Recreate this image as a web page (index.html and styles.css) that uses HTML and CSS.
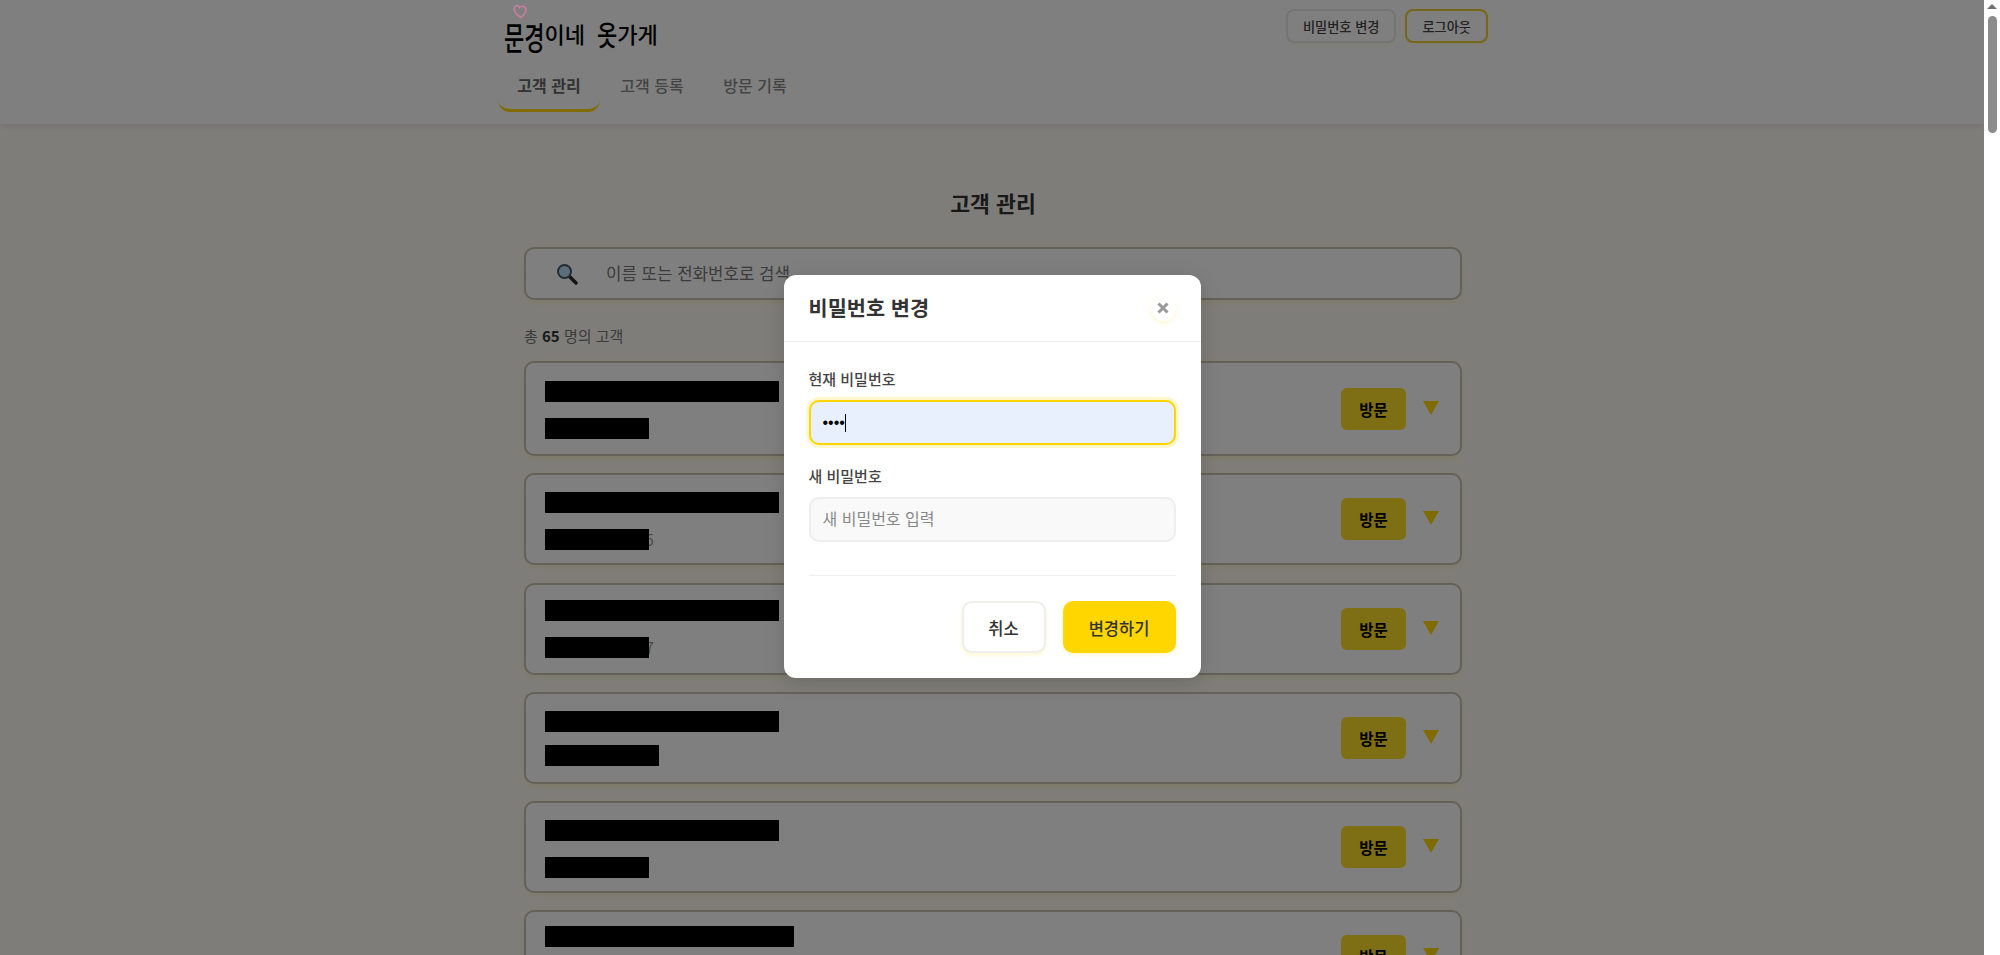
FILE: index.html
```html
<!DOCTYPE html>
<html lang="ko">
<head>
  <meta charset="UTF-8">
  <meta name="viewport" content="width=device-width, initial-scale=1.0">
  <title>문경이네 옷가게</title>
  <link rel="stylesheet" href="styles.css">
</head>
<body>
  <div class="page">
    <header class="site-header">
      <div class="header-inner">
        <div class="header-top">
          <div class="logo">
            <svg class="logo-heart" width="15" height="15" viewBox="0 0 15 15"><path d="M8 13.500C4 11 1 8 1.200 4.500 1.500 1.500 5 0.500 6.500 3.500 8 1.500 12 2 13 5 13.500 8 11 11 8 13.500Z" fill="none" stroke="#c97fa0" stroke-width="1.600"/></svg>
            <span class="logo-big">문경</span><span>이네</span><span class="logo-gap logo-mid">옷</span><span>가게</span>
          </div>
          <div class="header-actions">
            <button class="small-btn">비밀번호 변경</button>
            <button class="small-btn logout">로그아웃</button>
          </div>
        </div>
        <nav class="tabs">
          <a class="tab active">고객 관리</a>
          <a class="tab">고객 등록</a>
          <a class="tab">방문 기록</a>
        </nav>
      </div>
    </header>

    <main class="content">
      <h1 class="page-title">고객 관리</h1>
      <div class="search-box">
        <svg class="search-icon" width="22" height="22" viewBox="0 0 22 22">
          <path d="M13 13l7 7" stroke="#2b2b2b" stroke-width="3.500" stroke-linecap="round"/>
          <circle cx="8.500" cy="8.500" r="6.500" fill="#b9dcf2" stroke="#46596a" stroke-width="2"/>
        </svg>
        <span class="search-placeholder">이름 또는 전화번호로 검색</span>
      </div>
      <p class="total">총 <strong>65</strong> 명의 고객</p>

      <div class="customer-list">
        <div class="card card-first">
          <div class="card-info">
            <div class="redact" style="width:234px"></div>
            <div class="phone"><div class="redact" style="width:104px"></div></div>
          </div>
          <button class="visit-btn">방문</button>
          <span class="arrow"></span>
        </div>
        <div class="card">
          <div class="card-info">
            <div class="redact" style="width:234px"></div>
            <div class="phone"><div class="redact" style="width:104px"></div><span class="peek">5</span></div>
          </div>
          <button class="visit-btn">방문</button>
          <span class="arrow"></span>
        </div>
        <div class="card">
          <div class="card-info lifted">
            <div class="redact" style="width:234px"></div>
            <div class="phone"><div class="redact" style="width:104px"></div><span class="peek">7</span></div>
          </div>
          <button class="visit-btn">방문</button>
          <span class="arrow"></span>
        </div>
        <div class="card">
          <div class="card-info tight">
            <div class="redact" style="width:234px"></div>
            <div class="phone"><div class="redact" style="width:114px"></div></div>
          </div>
          <button class="visit-btn">방문</button>
          <span class="arrow"></span>
        </div>
        <div class="card">
          <div class="card-info">
            <div class="redact" style="width:234px"></div>
            <div class="phone"><div class="redact" style="width:104px"></div></div>
          </div>
          <button class="visit-btn">방문</button>
          <span class="arrow"></span>
        </div>
        <div class="card">
          <div class="card-info raised">
            <div class="redact" style="width:249px"></div>
            <div class="phone"><div class="redact" style="width:104px"></div></div>
          </div>
          <button class="visit-btn">방문</button>
          <span class="arrow"></span>
        </div>
      </div>
    </main>

    <!-- password modal -->
    <div class="overlay">
      <div class="modal">
        <div class="modal-header">
          <h2>비밀번호 변경</h2>
          <button class="close-btn">
            <svg width="12" height="12" viewBox="0 0 12 12"><path d="M1.500 1.500l9 9M10.500 1.500l-9 9" stroke="#999" stroke-width="3"/></svg>
          </button>
        </div>
        <form class="modal-body">
          <label for="current">현재 비밀번호</label>
          <div class="field field-focus" id="current"><span class="dots">••••</span><span class="caret"></span></div>
          <label for="next">새 비밀번호</label>
          <input class="field field-empty" id="next" type="password" placeholder="새 비밀번호 입력">
          <div class="modal-actions">
            <button type="button" class="btn-cancel">취소</button>
            <button type="button" class="btn-save">변경하기</button>
          </div>
        </form>
      </div>
    </div>
  </div>

  <div class="scrollbar">
    <span class="scroll-up"></span>
    <span class="scroll-thumb"></span>
  </div>
</body>
</html>
```

FILE: styles.css
```css
* {
  box-sizing: border-box;
  margin: 0;
  padding: 0;
  font-family: "Noto Sans CJK KR", "Noto Sans", sans-serif;
}

body, html {
  height: 100%;
  overflow: hidden;
}

body {
  display: flex;
  background: #fff;
  color: #333;
}

.page {
  position: relative;
  flex: 1;
  height: 955px;
  overflow: hidden;
  background: #fdfbf3;
}

/* header */
.site-header {
  height: 124px;
  background: #fff;
  box-shadow: 0 2px 6px rgba(0, 0, 0, 0.1);
}

.header-inner {
  width: 990px;
  margin-left: calc(50% - 494px);
}

.header-top {
  display: flex;
  justify-content: space-between;
  align-items: flex-start;
  height: 68px;
}

.logo {
  display: flex;
  align-items: center;
  height: 66px;
  padding: 0 0 0 6px;
  font-size: 22px;
  font-weight: 500;
  color: #000;
}

.logo span {
  display: inline-block;
}

.logo-big {
  transform: scaleY(1.45);
  margin-top: 4px;
}

.logo-mid {
  transform: scaleY(1.3);
}

.logo-gap {
  margin-left: 12px;
}

.logo-heart {
  position: absolute;
  z-index: 1;
  left: 513px;
  top: 4px;
}

.header-actions {
  display: flex;
  gap: 9px;
  padding-top: 9px;
}

.small-btn {
  height: 34px;
  padding: 0 15px;
  background: #fff;
  border: 2px solid #e8e8e8;
  border-radius: 8px;
  font-size: 13.200px;
  font-weight: 500;
  color: #444;
  box-shadow: 0 2px 4px rgba(255, 214, 0, 0.1);
}

.logout {
  border-color: #efcb30;
}

.tabs {
  display: flex;
  gap: 1px;
}

.tab {
  width: 102px;
  height: 44px;
  text-align: center;
  font-size: 16px;
  line-height: 34px;
  font-weight: 500;
  color: #888;
  border-radius: 0 0 12px 12px;
}

.tab.active {
  color: #666;
  font-weight: 700;
  border-bottom: 3px solid #ffd600;
}

/* customer list */
.content {
  width: 938px;
  margin-left: calc(50% - 468px);
}

.page-title {
  margin-top: 62px;
  text-align: center;
  font-size: 21.600px;
  line-height: 34px;
  font-weight: 700;
}

.search-box {
  display: flex;
  align-items: center;
  height: 53px;
  margin-top: 27px;
  padding-left: 30px;
  background: #fff;
  border: 2px solid #c6c3b0;
  border-radius: 10px;
  box-shadow: 0 2px 8px rgba(255, 214, 0, 0.15);
}

.search-placeholder {
  margin-left: 28px;
  padding-bottom: 2px;
  font-size: 16.800px;
  color: #777;
}

.total {
  margin-top: 25px;
  font-size: 15px;
  line-height: 22px;
  color: #777;
}

.total strong {
  color: #333;
}

.customer-list {
  display: flex;
  flex-direction: column;
  gap: 17.250px;
  margin-top: 14px;
}

.card {
  display: flex;
  align-items: center;
  height: 92px;
  padding: 0 21px 0 19px;
  background: #fff;
  border: 2px solid #c6c3b0;
  border-radius: 10px;
  box-shadow: 0 2px 8px rgba(255, 214, 0, 0.15);
}

.card-first {
  height: 95px;
}

.card-info {
  flex: 1;
  display: flex;
  flex-direction: column;
  gap: 16px;
  margin-top: 3px;
}

.card-info.lifted {
  margin-top: 0;
}

.card-info.tight {
  gap: 13px;
  margin-top: 1px;
}

.card-info.raised {
  margin-top: -3px;
}

.phone {
  display: flex;
  align-items: center;
}

.redact {
  position: relative;
  height: 21px;
  background: #000;
}

.peek {
  margin-left: -4px;
  font-size: 16px;
  line-height: 21px;
  color: #999;
}

.visit-btn {
  width: 65px;
  height: 42px;
  background: #ffde28;
  border: none;
  border-radius: 6px;
  font-size: 15.500px;
  font-weight: 700;
  color: #000;
}

.arrow {
  width: 0;
  height: 0;
  margin-left: 17px;
  margin-top: -2px;
  border-left: 8px solid transparent;
  border-right: 8px solid transparent;
  border-top: 14px solid #ffd600;
}

/* modal */
.overlay {
  position: absolute;
  inset: 0;
  display: flex;
  align-items: center;
  justify-content: center;
  background: rgba(0, 0, 0, 0.5);
}

.modal {
  width: 417px;
  height: 403px;
  margin-bottom: 2px;
  background: #fff;
  border-radius: 12px;
  box-shadow: 0 4px 20px rgba(0, 0, 0, 0.15);
}

.modal-header {
  display: flex;
  justify-content: space-between;
  align-items: center;
  height: 67px;
  padding: 0 25px 2px;
  border-bottom: 1px solid #eee;
}

.modal-header h2 {
  font-size: 20.800px;
  font-weight: 700;
}

.close-btn {
  display: flex;
  align-items: center;
  justify-content: center;
  width: 25px;
  height: 25px;
  margin-top: 2px;
  background: #fff;
  border: none;
  border-radius: 50%;
  box-shadow: 0 2px 4px rgba(255, 214, 0, 0.2);
}

.modal-body {
  display: flex;
  flex-direction: column;
  padding: 26px 25px 0;
}

.modal-body label {
  font-size: 15px;
  line-height: 22px;
  font-weight: 500;
  color: #444;
}

.field {
  width: 100%;
  height: 45px;
  margin-top: 10px;
  margin-bottom: 20px;
  padding: 0 12px;
  background: #f9f9f9;
  border: 2px solid #eee;
  border-radius: 10px;
  font-size: 16px;
  color: #000;
}

.field-empty {
  padding-bottom: 3px;
}

.field::placeholder {
  color: #888;
}

.field-focus {
  display: flex;
  align-items: center;
  background: #e8f0fe;
  border-color: #ffd600;
  box-shadow: 0 0 0 3px rgba(255, 214, 0, 0.2);
}

.dots {
  font-family: "Liberation Sans", sans-serif;
  font-size: 16px;
}

.caret {
  width: 1px;
  height: 18px;
  background: #000;
}

.modal-actions {
  display: flex;
  justify-content: flex-end;
  gap: 17px;
  margin-top: 13px;
  padding-top: 25px;
  border-top: 1px solid #eee;
}

.btn-cancel, .btn-save {
  height: 52px;
  padding-top: 2px;
  border-radius: 10px;
  font-size: 16.500px;
  font-weight: 500;
  color: #333;
}

.btn-cancel {
  width: 84px;
  background: #fff;
  border: 2px solid #eee;
  box-shadow: 0 2px 4px rgba(255, 214, 0, 0.2);
}

.btn-save {
  width: 113px;
  background: #ffd600;
  border: none;
  box-shadow: 0 2px 4px rgba(255, 214, 0, 0.2);
}

/* browser scrollbar */
.scrollbar {
  display: flex;
  flex-direction: column;
  align-items: center;
  width: 16px;
  height: 955px;
  background: #fff;
}

.scroll-up {
  width: 0;
  height: 0;
  margin-top: 4px;
  border-left: 5px solid transparent;
  border-right: 5px solid transparent;
  border-bottom: 5px solid #707070;
}

.scroll-thumb {
  width: 9px;
  height: 117px;
  margin-top: 7px;
  background: #8c8c8c;
  border-radius: 5px;
}
```
